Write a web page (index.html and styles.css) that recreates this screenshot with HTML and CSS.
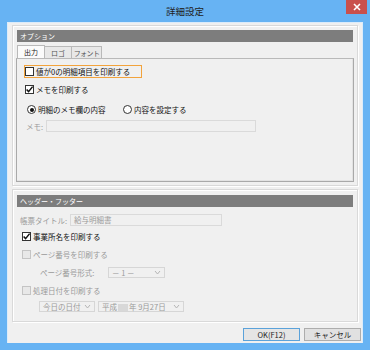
FILE: index.html
```html
<!DOCTYPE html>
<html lang="ja">

<head>
    <meta charset="UTF-8" />
    <title>詳細設定</title>
    <link rel="stylesheet" href="styles.css">
</head>

<body>
    <div class="window">
        <div class="titlebar">
            <span></span>
            <span class="title">詳細設定</span>
            <span class="close">
                <svg width="8" height="8" viewBox="0 0 8 8"><path d="M1 1 L7 7 M7 1 L1 7" stroke="#fff" stroke-width="1.6" /></svg>
            </span>
        </div>

        <div class="client">
            <!-- オプション -->
            <div class="group group-option">
                <div class="group-head">オプション</div>
                <div class="tabs">
                    <span class="tab active">出力</span>
                    <span class="tab">ロゴ</span>
                    <span class="tab tab-font">フォント</span>
                </div>
                <div class="tab-panel">
                    <div class="row focus">
                        <span class="box"></span>
                        <span>値が0の明細項目を印刷する</span>
                    </div>
                    <div class="row row-memo">
                        <span class="box checked">
                            <svg width="9" height="9" viewBox="0 0 9 9"><path d="M1.6 4.4 L3.6 6.6 L7.6 1.6" fill="none" stroke="#111" stroke-width="1.5" /></svg>
                        </span>
                        <span>メモを印刷する</span>
                    </div>
                    <div class="row radios">
                        <span class="radio on"></span>
                        <span class="radio-label">明細のメモ欄の内容</span>
                        <span class="radio"></span>
                        <span>内容を設定する</span>
                    </div>
                    <div class="row memo-field">
                        <span class="muted">メモ:</span>
                        <span class="field memo-input"></span>
                    </div>
                </div>
            </div>

            <!-- ヘッダー・フッター -->
            <div class="group group-header">
                <div class="group-head">ヘッダー・フッター</div>
                <div class="row title-row">
                    <span class="muted">帳票タイトル:</span>
                    <span class="field title-input">給与明細書</span>
                </div>
                <div class="row office-row">
                    <span class="box checked">
                        <svg width="9" height="9" viewBox="0 0 9 9"><path d="M1.6 4.4 L3.6 6.6 L7.6 1.6" fill="none" stroke="#111" stroke-width="1.5" /></svg>
                    </span>
                    <span>事業所名を印刷する</span>
                </div>
                <div class="row page-row">
                    <span class="box disabled"></span>
                    <span class="muted">ページ番号を印刷する</span>
                </div>
                <div class="row format-row">
                    <span class="muted format-label">ページ番号形式:</span>
                    <span class="select format-select">
                        <span>－ 1 －</span>
                        <svg width="7" height="5" viewBox="0 0 7 5"><path d="M1 1 L3.5 4 L6 1" fill="none" stroke="#b5b5b5" stroke-width="1" /></svg>
                    </span>
                </div>
                <div class="row date-row">
                    <span class="box disabled"></span>
                    <span class="muted">処理日付を印刷する</span>
                </div>
                <div class="row selects-row">
                    <span class="select today-select">
                        <span>今日の日付</span>
                        <svg width="7" height="5" viewBox="0 0 7 5"><path d="M1 1 L3.5 4 L6 1" fill="none" stroke="#b5b5b5" stroke-width="1" /></svg>
                    </span>
                    <span class="select era-select">
                        <span>平成<span class="blank"></span>年 9月27日</span>
                        <svg width="7" height="5" viewBox="0 0 7 5"><path d="M1 1 L3.5 4 L6 1" fill="none" stroke="#b5b5b5" stroke-width="1" /></svg>
                    </span>
                </div>
            </div>

            <div class="buttons">
                <span class="button default">OK(F12)</span>
                <span class="button">キャンセル</span>
            </div>
        </div>
    </div>
</body>

</html>
```

FILE: styles.css
```css
body {
    margin: 0;
    font-family: "Noto Sans CJK JP", "Noto Sans", sans-serif;
    font-size: 7.5px;
    color: #111111;
    white-space: nowrap;
}

.window {
    width: 370px;
    height: 350px;
    background-color: #67b3f3;
    padding: 0 7px 7px 7px;
    box-sizing: border-box;
    display: flex;
    flex-direction: column;
}

.titlebar {
    height: 22px;
    flex-shrink: 0;
    display: grid;
    grid-template-columns: 1fr auto 1fr;
}

.title {
    font-size: 9.5px;
    color: #222222;
    line-height: 23px;
}

.close {
    justify-self: end;
    margin-right: -4px;
    width: 21px;
    height: 14px;
    background-color: #c9504c;
    display: flex;
    justify-content: center;
    align-items: center;
}

.client {
    flex: 1;
    background-color: #f0f0f0;
    border: 1px solid #dcecfa;
    border-bottom: none;
    padding: 2px 4px 2px 4px;
    display: flex;
    flex-direction: column;
}

.group {
    border: 1px solid #d9d9d9;
    box-shadow: inset 1px 1px 0 #ffffff, 1px 1px 0 #ffffff;
    padding: 4px 4px 3px 4px;
}

.group-head {
    height: 12px;
    background-color: #7d7d7d;
    color: #ffffff;
    line-height: 12px;
    padding-left: 3px;
    font-size: 7px;
}

/* タブ */
.tabs {
    display: flex;
    margin-top: 3px;
    height: 13px;
    align-items: flex-end;
}

.tab {
    width: 28px;
    height: 12px;
    line-height: 12px;
    text-align: center;
    font-size: 7px;
    border: 1px solid #b9b9b9;
    border-bottom: none;
    background-color: #e8e8e8;
    box-sizing: border-box;
    color: #555555;
    margin-left: -1px;
    overflow: hidden;
}

.tab.active {
    height: 13px;
    margin-left: 0;
    background-color: #fbfbfb;
    color: #222222;
}

.tab-font {
    width: 31px;
    letter-spacing: -0.6px;
}

.tab-panel {
    margin: 0 -1px;
    height: 124px;
    box-sizing: border-box;
    border: 1px solid #a9a9a9;
    border-top-color: #b9b9b9;
    box-shadow: inset -1px -1px 0 #e3e3e3;
    padding: 6px 7px;
}

.row {
    display: flex;
    align-items: center;
    height: 13px;
}

.focus {
    width: 118px;
    box-sizing: border-box;
    border: 1px solid #f2a33c;
}

.box {
    width: 9px;
    height: 9px;
    box-sizing: border-box;
    border: 1px solid #333333;
    background-color: #ffffff;
    margin-right: 2px;
    display: flex;
    flex-shrink: 0;
}

.box svg {
    margin: -1px;
}

.box.disabled {
    border-color: #c4c4c4;
    background-color: #e8e8e8;
}

.row-memo {
    margin-top: 5px;
    padding-left: 1px;
}

.radios {
    margin-top: 7px;
    padding-left: 3px;
}

.radio {
    width: 9px;
    height: 9px;
    box-sizing: border-box;
    border: 1px solid #333333;
    border-radius: 50%;
    background-color: #ffffff;
    margin-right: 2px;
    display: flex;
    justify-content: center;
    align-items: center;
}

.radio.on::after {
    content: "";
    width: 4px;
    height: 4px;
    border-radius: 50%;
    background-color: #111111;
}

.radio-label {
    width: 85px;
}

.memo-field {
    margin-top: 4px;
    padding-left: 2px;
    height: 12px;
}

.muted {
    color: #9a9a9a;
}

.field {
    height: 12px;
    box-sizing: border-box;
    border: 1px solid #dadada;
    background-color: #f0f0f0;
    line-height: 10px;
    padding-left: 3px;
    color: #9a9a9a;
}

.memo-input {
    width: 210px;
    margin-left: 3px;
}

/* ヘッダー・フッター */
.group-header {
    margin-top: 3px;
    padding-top: 5px;
    height: 133px;
    box-sizing: border-box;
}

.title-row {
    margin-top: 7px;
    padding-left: 3px;
    height: 12px;
}

.title-input {
    width: 152px;
    margin-left: 3px;
}

.office-row {
    margin-top: 4px;
    padding-left: 5px;
}

.page-row {
    margin-top: 5px;
    padding-left: 5px;
}

.format-row {
    margin-top: 5px;
    padding-left: 23px;
    height: 12px;
}

.format-label {
    width: 68px;
}

.select {
    height: 11px;
    box-sizing: border-box;
    border: 1px solid #d6d6d6;
    background-color: #f0f0f0;
    color: #9a9a9a;
    display: flex;
    align-items: center;
    justify-content: space-between;
    padding: 0 3px;
}

.format-select {
    width: 57px;
}

.date-row {
    margin-top: 6px;
    padding-left: 5px;
}

.selects-row {
    margin-top: 4px;
    padding-left: 22px;
    height: 11px;
    gap: 3px;
}

.today-select {
    width: 56px;
}

.era-select {
    width: 86px;
}

.blank {
    display: inline-block;
    width: 10px;
    height: 7px;
    background-color: #d8d8d8;
    margin: 0 1px;
    vertical-align: -1px;
}

/* ボタン */
.buttons {
    display: flex;
    justify-content: flex-end;
    gap: 4px;
    margin-top: 6px;
    margin-right: -3px;
}

.button {
    width: 57px;
    height: 13px;
    box-sizing: border-box;
    border: 1px solid #adadad;
    background-color: #e1e1e1;
    text-align: center;
    line-height: 11px;
    color: #222222;
}

.button.default {
    border-color: #5ba2da;
    background-color: #e5e5e5;
}
```
